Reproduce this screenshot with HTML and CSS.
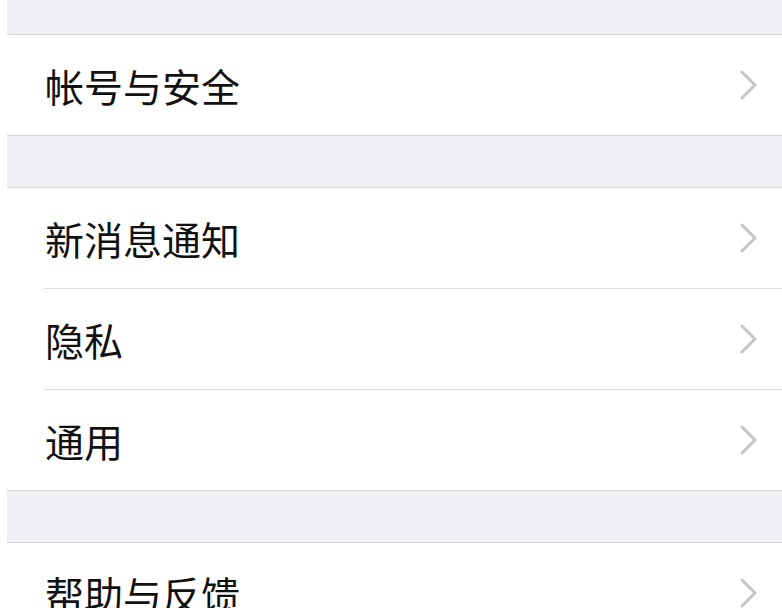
FILE: index.html
```html
<!DOCTYPE html>
<html lang="zh">
<head>
<meta charset="utf-8">
<link rel="stylesheet" href="styles.css">
</head>
<body>
<div class="page">
  <div class="gap first"></div>
  <div class="group">
    <div class="row"><span class="label">帐号与安全</span><svg class="chev" viewBox="0 0 18 30" width="18" height="30"><polyline points="2,2 15,15 2,28"/></svg></div>
  </div>
  <div class="gap"></div>
  <div class="group">
    <div class="row"><span class="label">新消息通知</span><svg class="chev" viewBox="0 0 18 30" width="18" height="30"><polyline points="2,2 15,15 2,28"/></svg></div>
    <div class="row"><span class="label">隐私</span><svg class="chev" viewBox="0 0 18 30" width="18" height="30"><polyline points="2,2 15,15 2,28"/></svg></div>
    <div class="row"><span class="label">通用</span><svg class="chev" viewBox="0 0 18 30" width="18" height="30"><polyline points="2,2 15,15 2,28"/></svg></div>
  </div>
  <div class="gap"></div>
  <div class="group">
    <div class="row"><span class="label">帮助与反馈</span><svg class="chev" viewBox="0 0 18 30" width="18" height="30"><polyline points="2,2 15,15 2,28"/></svg></div>
  </div>
</div>
</body>
</html>
```
FILE: styles.css
```css
html, body {
  margin: 0;
  padding: 0;
  background: #ffffff;
}
body {
  font-family: "Noto Sans CJK SC", "Noto Sans", sans-serif;
  width: 782px;
  height: 608px;
  overflow: hidden;
}
.page {
  padding-left: 7px;
}
.gap {
  height: 51px;
  background: #efeff4;
  border-bottom: 1px solid #d8d8dc;
}
.gap.first {
  height: 34px;
}
.group {
  background: #ffffff;
  border-bottom: 1px solid #d8d8dc;
}
.row {
  margin-left: 37px;
  height: 100px;
  display: flex;
  align-items: center;
  justify-content: space-between;
  padding-right: 24px;
  border-bottom: 1px solid #dcdce0;
}
.row:last-child {
  border-bottom: none;
}
.label {
  font-size: 39px;
  color: #111111;
  line-height: 1;
  margin-left: 1px;
}
.chev polyline {
  fill: none;
  stroke: #c4c4c9;
  stroke-width: 3;
  stroke-linecap: round;
  stroke-linejoin: round;
}
```
